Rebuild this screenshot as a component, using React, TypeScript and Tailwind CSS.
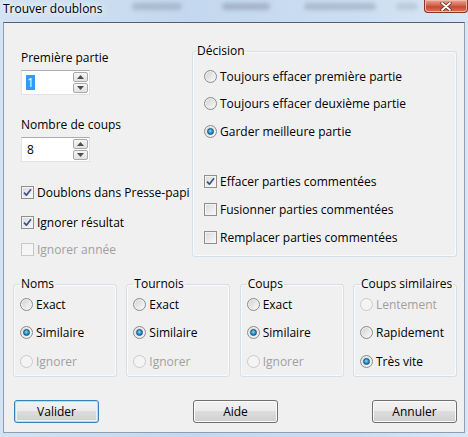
import React from "react";

const ui = "font-['Segoe_UI','Open_Sans',sans-serif] text-[12px] leading-[15px]";

function CheckMark() {
  return (
    <svg width="9" height="9" viewBox="0 0 9 9" className="block">
      <path d="M1 4.6 L3.4 7.2 L8 1.2" fill="none" stroke="#3d5288" strokeWidth="1.7" strokeLinejoin="round" />
    </svg>
  );
}

function Checkbox({ label, checked, disabled }: { label: string; checked?: boolean; disabled?: boolean }) {
  return (
    <div className="flex h-[16px] items-center gap-[3px] whitespace-nowrap">
      <span
        className={
          "flex h-[13px] w-[13px] items-center justify-center border " +
          (disabled
            ? "border-[#c8c8c8] bg-[#f5f5f5]"
            : "border-[#8e8f8f] bg-[linear-gradient(135deg,#d9d9d9,#fbfbfb)] shadow-[inset_0_0_0_1px_#f4f4f4]")
        }
      >
        {checked && <CheckMark />}
      </span>
      <span className={disabled ? "text-[#a0a0a0]" : "text-black"}>{label}</span>
    </div>
  );
}

function Radio({ label, checked, disabled }: { label: string; checked?: boolean; disabled?: boolean }) {
  return (
    <div className="flex h-[16px] items-center gap-[3px] whitespace-nowrap">
      <span
        className={
          "flex h-[13px] w-[13px] items-center justify-center rounded-full border " +
          (disabled
            ? "border-[#cacaca] bg-[#f4f4f4]"
            : "border-[#8b8b8b] bg-[linear-gradient(135deg,#cfcfcf,#fdfdfd)] shadow-[inset_0_0_0_1px_#f0f0f0]")
        }
      >
        {checked && (
          <span className="h-[7px] w-[7px] rounded-full border border-[#1a5179] bg-[radial-gradient(circle_at_45%_40%,#8fdcfb_0%,#2e9ad0_45%,#0d5a8c_100%)]" />
        )}
      </span>
      <span className={disabled ? "text-[#a0a0a0]" : "text-black"}>{label}</span>
    </div>
  );
}

function Arrow({ up }: { up?: boolean }) {
  return (
    <svg width="7" height="4" viewBox="0 0 7 4" className="block">
      <path d={up ? "M0 4 L3.5 0 L7 4 Z" : "M0 0 L7 0 L3.5 4 Z"} fill="#4d4d4d" />
    </svg>
  );
}

function Spin({ value, selected }: { value: string; selected?: boolean }) {
  return (
    <div className="flex h-[25px] w-[69px] border border-[#dfe3e8] border-t-[#abadb3] bg-white">
      <div className="flex flex-1 items-center pl-[4px]">
        <span className={selected ? "bg-[#3399ff] px-[1px] text-white" : "pl-[1px] text-black"}>{value}</span>
      </div>
      <div className="flex w-[17px] flex-col gap-[1px] p-[1px]">
        <div className="flex flex-1 items-center justify-center rounded-[2px] border border-[#a9a9a9] bg-[linear-gradient(to_bottom,#f6f6f6,#e1e1e1)]">
          <Arrow up />
        </div>
        <div className="flex flex-1 items-center justify-center rounded-[2px] border border-[#a9a9a9] bg-[linear-gradient(to_bottom,#f6f6f6,#e1e1e1)]">
          <Arrow />
        </div>
      </div>
    </div>
  );
}

function Group({ title, children, className }: { title: string; children: React.ReactNode; className?: string }) {
  return (
    <fieldset className={"rounded-[3px] border border-[#d5dfe5] shadow-[inset_0_0_0_1px_#fafafa] " + (className ?? "")}>
      <legend className="px-[1px] leading-[14px] whitespace-nowrap">{title}</legend>
      {children}
    </fieldset>
  );
}

function Button({ label, primary }: { label: string; primary?: boolean }) {
  return (
    <button
      className={
        "h-[23px] w-[85px] rounded-[3px] border bg-[linear-gradient(to_bottom,#f2f2f2_0%,#ebebeb_50%,#dddddd_50%,#cfcfcf_100%)] text-black " +
        (primary
          ? "border-[#3c7fb1] shadow-[inset_0_0_0_1px_#a6e3f7,inset_0_0_0_2px_#e4f6fc]"
          : "border-[#707070] shadow-[inset_0_0_0_1px_#fbfbfb]")
      }
    >
      {label}
    </button>
  );
}

export default function App() {
  return (
    <div className={"flex h-[437px] w-[468px] flex-col bg-[linear-gradient(to_right,#d3e3f3,#c3d8ee_40%,#cbddf1_75%,#d9e7f5)] " + ui}>
      <div className="flex h-[22px] items-start">
        <span className="pl-[3px] pt-[1px] text-black [text-shadow:0_0_6px_#fff,0_0_10px_#fff]">Trouver doublons</span>
        <div className="ml-[30px] mt-[3px] h-[7px] w-[50px] rounded-full bg-[#8a9aae] opacity-50 blur-[2px]" />
        <div className="ml-[40px] mt-[3px] h-[7px] w-[48px] rounded-full bg-[#7f8ea3] opacity-50 blur-[2px]" />
        <div className="ml-[34px] mt-[3px] h-[7px] w-[72px] rounded-full bg-[#8a9aae] opacity-50 blur-[2px]" />
        <div className="ml-[20px] mt-[3px] h-[7px] w-[22px] rounded-full bg-[#9aa8ba] opacity-40 blur-[2px]" />
        <div className="ml-auto flex h-[13px] w-[44px] items-center justify-center rounded-b-[4px] border border-t-0 border-[#8b3526] bg-[linear-gradient(to_bottom,#e9a795,#d4624b_45%,#c44a33_55%,#d9735b)] shadow-[inset_0_0_0_1px_#f2b8a8]">
          <svg width="12" height="9" viewBox="0 0 12 9" className="block">
            <path d="M2 1 L10 8 M10 1 L2 8" stroke="#5a2a22" strokeWidth="3.2" strokeLinecap="round" />
            <path d="M2 1 L10 8 M10 1 L2 8" stroke="#ffffff" strokeWidth="1.8" strokeLinecap="round" />
          </svg>
        </div>
      </div>

      <div className="mx-[3px] flex h-[411px] flex-col border border-[#8d9db3] border-t-[#55606f] bg-[#f0f0f0]">
        <div className="flex h-[234px]">
          <div className="flex w-[188px] flex-col pl-[17px]">
            <div className="mt-[27px]">Première partie</div>
            <div className="mt-[5px]"><Spin value="1" selected /></div>
            <div className="mt-[22px]">Nombre de coups</div>
            <div className="mt-[5px]"><Spin value="8" /></div>
            <div className="mt-[22px]"><Checkbox label="Doublons dans Presse-papi" checked /></div>
            <div className="mt-[14px]"><Checkbox label="Ignorer résultat" checked /></div>
            <div className="mt-[11px]"><Checkbox label="Ignorer année" disabled /></div>
          </div>
          <fieldset className="mt-[21px] h-[213px] w-[265px] rounded-[3px] border border-[#d5dfe5] pl-[11px] shadow-[inset_0_0_0_1px_#fafafa]">
            <legend className="-ml-[8px] px-[1px] leading-[14px]">Décision</legend>
            <div className="mt-[10px]"><Radio label="Toujours effacer première partie" /></div>
            <div className="mt-[11px]"><Radio label="Toujours effacer deuxième partie" /></div>
            <div className="mt-[12px]"><Radio label="Garder meilleure partie" checked /></div>
            <div className="mt-[34px]"><Checkbox label="Effacer parties commentées" checked /></div>
            <div className="mt-[12px]"><Checkbox label="Fusionner parties commentées" /></div>
            <div className="mt-[12px]"><Checkbox label="Remplacer parties commentées" /></div>
          </fieldset>
        </div>

        <div className="mt-[20px] flex justify-between pl-[9px] pr-[7px]">
          {[
            { t: "Noms", o: ["Exact", "Similaire", "Ignorer"], c: 1, d: 2 },
            { t: "Tournois", o: ["Exact", "Similaire", "Ignorer"], c: 1, d: 2 },
            { t: "Coups", o: ["Exact", "Similaire", "Ignorer"], c: 1, d: 2 },
            { t: "Coups similaires", o: ["Lentement", "Rapidement", "Très vite"], c: 2, d: 0 },
          ].map((g) => (
            <Group key={g.t} title={g.t} className="h-[100px] w-[104px] pl-[6px]">
              <div className="mt-[5px]"><Radio label={g.o[0]} checked={g.c === 0} disabled={g.d === 0} /></div>
              <div className="mt-[12px]"><Radio label={g.o[1]} checked={g.c === 1} /></div>
              <div className="mt-[13px]"><Radio label={g.o[2]} checked={g.c === 2} disabled={g.d === 2} /></div>
            </Group>
          ))}
        </div>

        <div className="mt-[23px] flex justify-between pl-[10px] pr-[7px]">
          <Button label="Valider" primary />
          <Button label="Aide" />
          <Button label="Annuler" />
        </div>
      </div>
    </div>
  );
}
